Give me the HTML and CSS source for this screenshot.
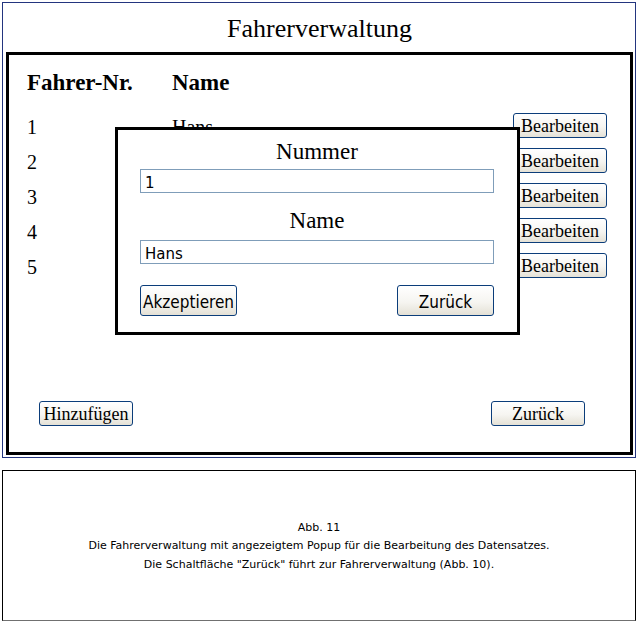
FILE: index.html
```html
<!DOCTYPE html>
<html lang="de">
<head>
  <meta charset="UTF-8">
  <title>Fahrerverwaltung</title>
  <link rel="stylesheet" href="styles.css">
</head>
<body>
  <!-- Window frame -->
  <div class="window">
    <h1 class="title">Fahrerverwaltung</h1>

    <div class="panel">
      <div class="row head">
        <span class="cell">Fahrer-Nr.</span>
        <span class="cell">Name</span>
      </div>

      <div class="row">
        <span class="cell">1</span>
        <span class="cell">Hans</span>
        <button class="btn">Bearbeiten</button>
      </div>
      <div class="row">
        <span class="cell">2</span>
        <span class="cell"></span>
        <button class="btn">Bearbeiten</button>
      </div>
      <div class="row">
        <span class="cell">3</span>
        <span class="cell"></span>
        <button class="btn">Bearbeiten</button>
      </div>
      <div class="row">
        <span class="cell">4</span>
        <span class="cell"></span>
        <button class="btn">Bearbeiten</button>
      </div>
      <div class="row">
        <span class="cell">5</span>
        <span class="cell"></span>
        <button class="btn">Bearbeiten</button>
      </div>

      <div class="footer">
        <button class="btn">Hinzufügen</button>
        <button class="btn">Zurück</button>
      </div>

      <!-- Edit popup -->
      <div class="popup">
        <div class="label first">Nummer</div>
        <input class="field first" type="text" value="1">
        <div class="label second">Name</div>
        <input class="field second" type="text" value="Hans">
        <div class="popup-actions">
          <button class="btn sans">Akzeptieren</button>
          <button class="btn sans">Zurück</button>
        </div>
      </div>
    </div>
  </div>

  <!-- Caption -->
  <div class="caption">
    <p>Abb. 11</p>
    <p>Die Fahrerverwaltung mit angezeigtem Popup für die Bearbeitung des Datensatzes.</p>
    <p>Die Schaltfläche "Zurück" führt zur Fahrerverwaltung (Abb. 10).</p>
  </div>
</body>
</html>
```

FILE: styles.css
```css
body {
  margin: 0;
  background-color: white;
  font-family: "Liberation Serif", "Times New Roman", serif;
  color: black;
}

/* Outer window */
.window {
  margin: 2px 2px 0 2px;
  width: 634px;
  box-sizing: border-box;
  border: 1px solid #23357f;
  padding: 0 2px 2px 3px;
  background: white;
}

.title {
  margin: 0;
  padding-top: 11px;
  height: 38px;
  font-size: 26px;
  font-weight: normal;
  line-height: 30px;
  text-align: center;
}

/* Inner black panel */
.panel {
  position: relative;
  height: 403px;
  box-sizing: border-box;
  border: 3px solid black;
  padding: 10px 23px 26px 18px;
  display: flex;
  flex-direction: column;
}

.row {
  display: grid;
  grid-template-columns: 145px 1fr 94px;
  align-items: center;
  height: 35px;
}

.row .cell {
  font-size: 20px;
  line-height: 30px;
  padding-top: 5px;
}

.row .btn {
  margin-top: 2px;
}

.row.head {
  margin-bottom: 7px;
}

.row.head .cell {
  font-size: 23px;
  font-weight: bold;
  line-height: 35px;
  padding-top: 0;
}

.footer {
  margin-top: auto;
  display: flex;
  justify-content: space-between;
  padding: 0 22px 0 12px;
}

/* Buttons */
.btn {
  width: 94px;
  height: 25px;
  padding: 0;
  border: 1px solid #0b3d7a;
  border-radius: 3px;
  background: linear-gradient(#ffffff, #f6f5f1 55%, #e4e1d6);
  font-family: "Liberation Serif", "Times New Roman", serif;
  font-size: 18px;
  color: black;
  line-height: 22px;
}

.btn.sans {
  width: 97px;
  height: 31px;
  padding-top: 3px;
  font-family: "DejaVu Sans Condensed", "DejaVu Sans", sans-serif;
  font-size: 17px;
}

/* Popup overlay */
.popup {
  position: absolute;
  left: 106px;
  top: 72px;
  width: 405px;
  height: 208px;
  box-sizing: border-box;
  border: 3px solid black;
  background: white;
  padding: 9px 23px 0 22px;
}

.label {
  font-size: 23px;
  line-height: 26px;
  text-align: center;
}

.label.second {
  margin-top: 15px;
}

.field {
  display: block;
  width: 100%;
  height: 24px;
  box-sizing: border-box;
  margin: 4px 0 0 0;
  border: 1px solid #7f9db9;
  padding: 3px 4px 0 4px;
  font-family: "DejaVu Sans", sans-serif;
  font-size: 15px;
  color: black;
  outline: none;
}

.field.second {
  margin-top: 6px;
}

.popup-actions {
  margin-top: 21px;
  display: flex;
  justify-content: space-between;
}

/* Caption box */
.caption {
  margin: 12px 2px 0 2px;
  width: 634px;
  height: 151px;
  box-sizing: border-box;
  border: 1px solid black;
  border-bottom-color: #707070;
  padding-top: 2px;
  display: flex;
  flex-direction: column;
  justify-content: center;
  align-items: center;
  font-family: "DejaVu Sans", sans-serif;
  font-size: 11px;
}

.caption p {
  margin: 0;
  line-height: 18.5px;
}
```
